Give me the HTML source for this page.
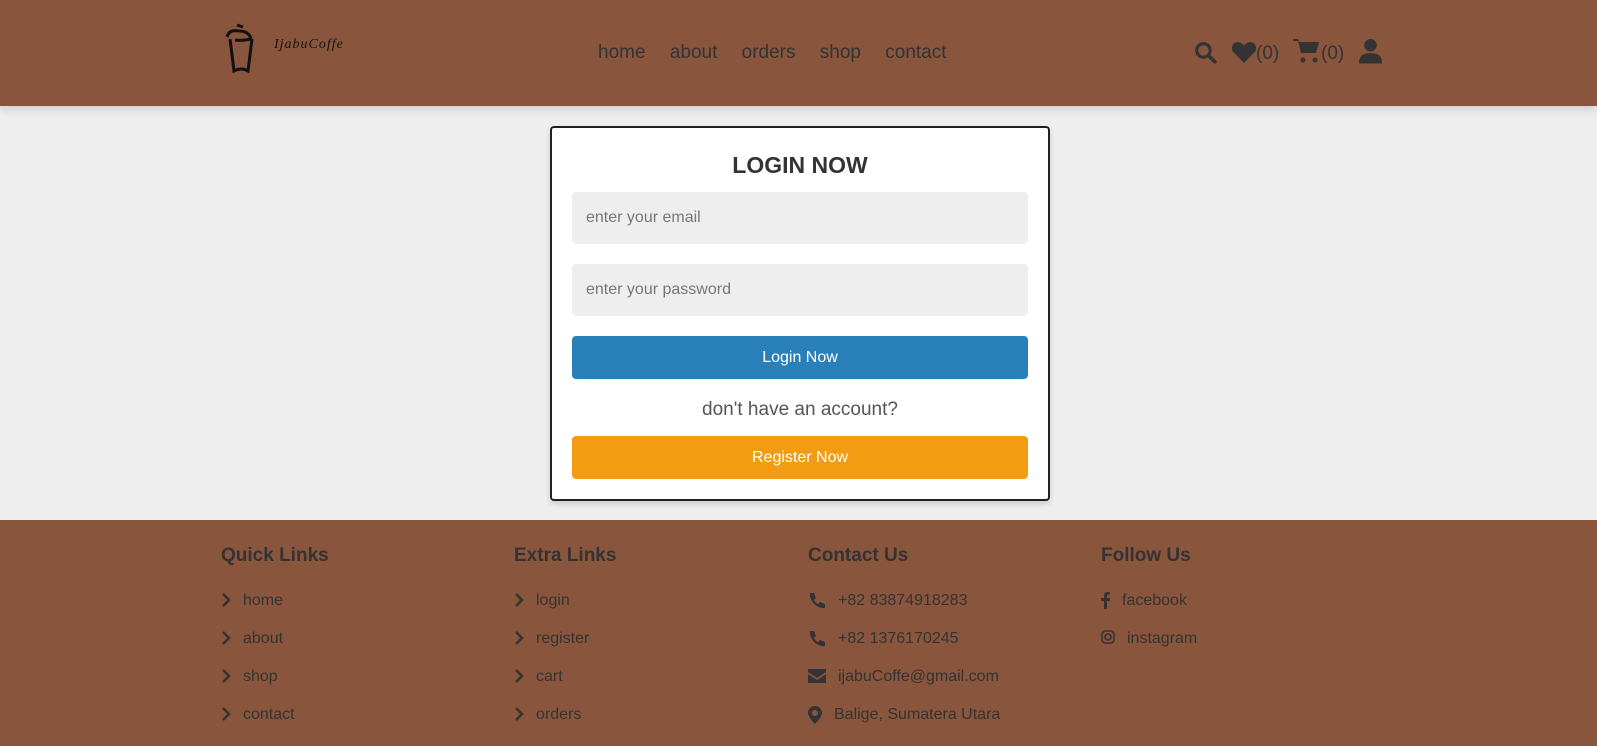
<!DOCTYPE html>
<html><head><meta charset="utf-8"><style>
*{margin:0;padding:0;box-sizing:border-box}
body{width:1597px;height:746px;overflow:hidden;background:#eee;font-family:"Liberation Sans",sans-serif;color:#333;position:relative}
.hdr{position:absolute;left:0;top:0;width:1597px;height:106px;background:#8a553d;box-shadow:0 4px 8px rgba(0,0,0,.12)}
.nav{position:absolute;top:42px;left:598px;font-size:19px;color:#333}
.nav span{margin-right:19px}
.logo{position:absolute;left:274px;top:37px;font-family:"Liberation Serif",serif;font-style:italic;font-size:14px;color:#111;letter-spacing:1px}
.box{position:absolute;left:550px;top:126px;width:500px;height:375px;background:#fff;border:2px solid #222;border-radius:4px;box-shadow:0 3px 6px rgba(0,0,0,.15)}
.box h3{text-align:center;font-size:23px;margin-top:24px;color:#333}
.inp{position:absolute;left:20px;width:456px;height:52px;background:#eee;border-radius:4px;font-size:16px;color:#777;padding:17px 14px}
.btn{position:absolute;left:20px;width:456px;height:43px;border-radius:4px;color:#fff;font-size:16px;text-align:center;line-height:43px}
.ft{position:absolute;left:0;top:520px;width:1597px;height:226px;background:#8a553d}
.col{position:absolute;top:25px}
.col h4{font-size:19px;color:#333;margin-bottom:25px}
.col div{font-size:16px;color:#333;height:38px;display:flex;align-items:flex-start}
.col svg{margin-right:12px;flex:none}
</style></head><body>
<div class="hdr">
<svg style="position:absolute;left:221px;top:23px" width="36" height="52" viewBox="0 0 36 52" fill="none" stroke="#111" stroke-width="3"><path d="M9 16 L13 48 Q20 44 27 48 L31 16"/><path d="M6 14 Q8 6 18 8 Q28 8 30 16 Q22 18 14 17"/><path d="M16 2 L22 4"/></svg>
<div class="logo">IjabuCoffe</div>
<div class="nav"><span>home</span> <span>about</span> <span>orders</span> <span>shop</span> <span>contact</span></div>
<svg style="position:absolute;left:1193px;top:40px" width="25" height="25" viewBox="0 0 24 24"><circle cx="10" cy="10" r="6.5" fill="none" stroke="#333" stroke-width="3"/><path d="M15 15l6 6" stroke="#333" stroke-width="3.5" stroke-linecap="round"/></svg>
<svg style="position:absolute;left:1231px;top:40px" width="26" height="24" viewBox="0 0 24 22"><path d="M12 21L2 11C-1 7 2 1 7 2c2 0 4 2 5 3 1-1 3-3 5-3 5-1 8 5 5 9z" fill="#333"/></svg>
<span style="position:absolute;left:1256px;top:43px;font-size:19px">(0)</span>
<svg style="position:absolute;left:1293px;top:38px" width="28" height="26" viewBox="0 0 28 26" fill="#333"><path d="M0 1h5l1 3h20l-3 11H8L5 3H0z"/><circle cx="10" cy="22" r="2.5"/><circle cx="22" cy="22" r="2.5"/></svg>
<span style="position:absolute;left:1321px;top:43px;font-size:19px">(0)</span>
<svg style="position:absolute;left:1359px;top:38px" width="23" height="26" viewBox="0 0 22 24" fill="#333"><circle cx="11" cy="6.5" r="6"/><path d="M0 24c0-8 4-10 11-10s11 2 11 10z"/></svg>
</div>
<div class="box">
<h3>LOGIN NOW</h3>
<div class="inp" style="top:64px">enter your email</div>
<div class="inp" style="top:136px">enter your password</div>
<div class="btn" style="top:208px;background:#2980b9">Login Now</div>
<div style="position:absolute;top:271px;width:100%;text-align:center;font-size:19px;color:#555">don't have an account?</div>
<div class="btn" style="top:308px;background:#f39c12">Register Now</div>
</div>
<div class="ft">
<div class="col" style="left:221px"><h4>Quick Links</h4>
<div><svg width="10" height="16" viewBox="0 0 10 16"><path d="M2 2l6 6-6 6" stroke="#333" stroke-width="2.5" fill="none"/></svg>home</div>
<div><svg width="10" height="16" viewBox="0 0 10 16"><path d="M2 2l6 6-6 6" stroke="#333" stroke-width="2.5" fill="none"/></svg>about</div>
<div><svg width="10" height="16" viewBox="0 0 10 16"><path d="M2 2l6 6-6 6" stroke="#333" stroke-width="2.5" fill="none"/></svg>shop</div>
<div><svg width="10" height="16" viewBox="0 0 10 16"><path d="M2 2l6 6-6 6" stroke="#333" stroke-width="2.5" fill="none"/></svg>contact</div></div>
<div class="col" style="left:514px"><h4>Extra Links</h4>
<div><svg width="10" height="16" viewBox="0 0 10 16"><path d="M2 2l6 6-6 6" stroke="#333" stroke-width="2.5" fill="none"/></svg>login</div>
<div><svg width="10" height="16" viewBox="0 0 10 16"><path d="M2 2l6 6-6 6" stroke="#333" stroke-width="2.5" fill="none"/></svg>register</div>
<div><svg width="10" height="16" viewBox="0 0 10 16"><path d="M2 2l6 6-6 6" stroke="#333" stroke-width="2.5" fill="none"/></svg>cart</div>
<div><svg width="10" height="16" viewBox="0 0 10 16"><path d="M2 2l6 6-6 6" stroke="#333" stroke-width="2.5" fill="none"/></svg>orders</div></div>
<div class="col" style="left:808px"><h4>Contact Us</h4>
<div><svg width="18" height="18" viewBox="0 0 18 18" fill="#333"><path d="M2 1l4 0 2 5-2 2c1 2 3 4 4 4l2-2 5 2v4c-8 1-16-7-15-15z"/></svg>+82 83874918283</div>
<div><svg width="18" height="18" viewBox="0 0 18 18" fill="#333"><path d="M2 1l4 0 2 5-2 2c1 2 3 4 4 4l2-2 5 2v4c-8 1-16-7-15-15z"/></svg>+82 1376170245</div>
<div><svg width="18" height="16" viewBox="0 0 18 14" fill="#333"><path d="M0 0h18v3l-9 6-9-6z"/><path d="M0 5l9 6 9-6v9H0z"/></svg>ijabuCoffe@gmail.com</div>
<div><svg width="14" height="18" viewBox="0 0 14 18" fill="#333"><path d="M7 0a7 7 0 0 1 7 7c0 4-7 11-7 11S0 11 0 7a7 7 0 0 1 7-7zm0 4a3 3 0 1 0 0 6 3 3 0 0 0 0-6z"/></svg>Balige, Sumatera Utara</div></div>
<div class="col" style="left:1101px"><h4>Follow Us</h4>
<div><svg width="9" height="17" viewBox="0 0 9 17" fill="#333"><path d="M6 17V9h2.5l.5-3H6V4c0-1 .5-1.5 1.5-1.5H9V0H6.5C4 0 3 1.5 3 4v2H0v3h3v8z"/></svg>facebook</div>
<div><svg width="14" height="14" viewBox="0 0 14 14" fill="none" stroke="#333" stroke-width="1.6"><rect x="1" y="1" width="12" height="12" rx="3.5"/><circle cx="7" cy="7" r="3"/></svg>instagram</div></div>
</div>
</body></html>
